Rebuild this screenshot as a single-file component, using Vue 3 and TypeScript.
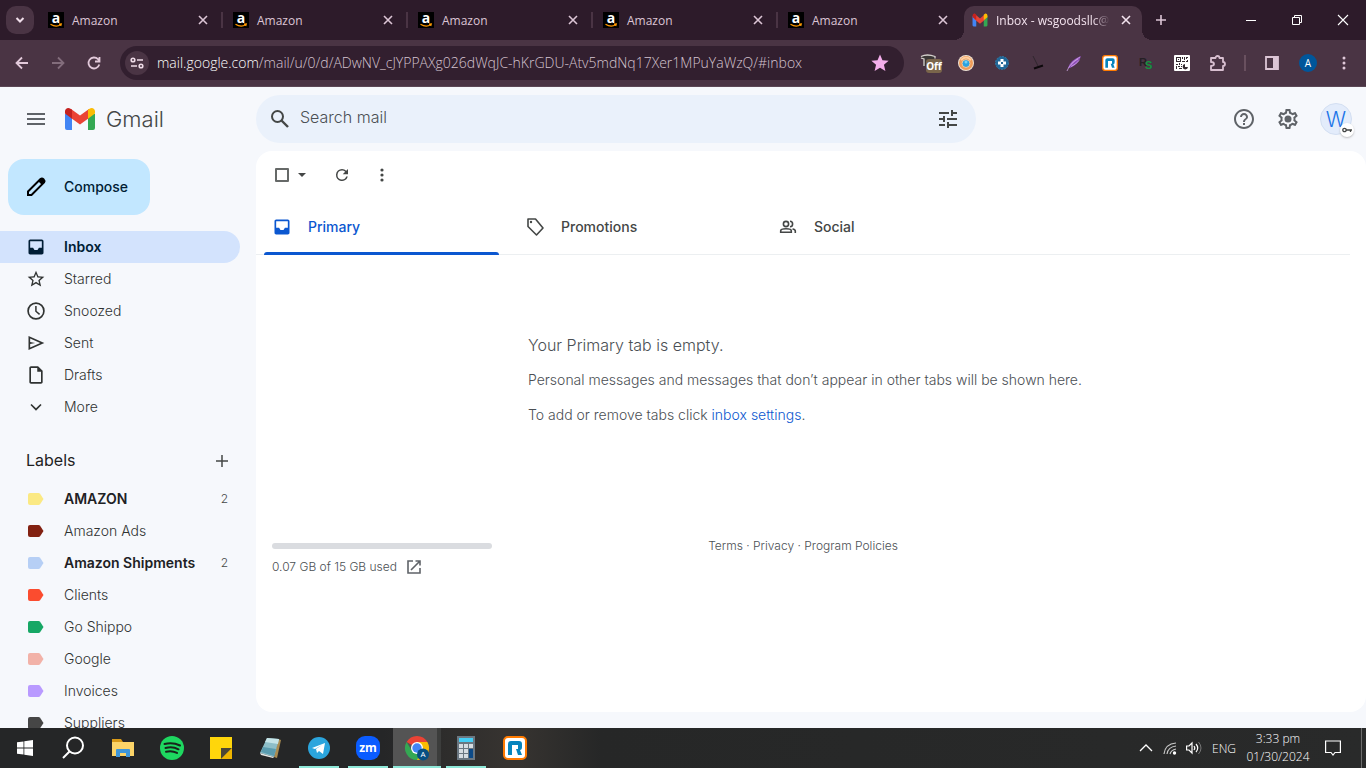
<script setup lang="ts">
interface Extension { name: string; icon: string }
interface NavItem { name: string; icon: string; active?: boolean }
interface LabelItem { name: string; color: string; count?: number }
interface TaskItem { name: string; icon: string; open?: boolean; active?: boolean }

const tabs: string[] = ['Amazon', 'Amazon', 'Amazon', 'Amazon', 'Amazon']

const extensions: Extension[] = [
  { name: 'Blocker', icon: 'blocker' },
  { name: 'Orb', icon: 'orb' },
  { name: 'Plus', icon: 'plus' },
  { name: 'Lamp', icon: 'lamp' },
  { name: 'Feather', icon: 'feather' },
  { name: 'RingCentral', icon: 'ring' },
  { name: 'RS', icon: 'rs' },
  { name: 'QR code', icon: 'qr' },
  { name: 'Extensions', icon: 'puzzle' },
]

const nav: NavItem[] = [
  { name: 'Inbox', icon: 'inbox', active: true },
  { name: 'Starred', icon: 'star' },
  { name: 'Snoozed', icon: 'clock' },
  { name: 'Sent', icon: 'sent' },
  { name: 'Drafts', icon: 'draft' },
  { name: 'More', icon: 'more' },
]

const labels: LabelItem[] = [
  { name: 'AMAZON', color: '#fbe983', count: 2 },
  { name: 'Amazon Ads', color: '#822111' },
  { name: 'Amazon Shipments', color: '#b6cff5', count: 2 },
  { name: 'Clients', color: '#fb4c2f' },
  { name: 'Go Shippo', color: '#16a765' },
  { name: 'Google', color: '#f2b2a8' },
  { name: 'Invoices', color: '#b99aff' },
  { name: 'Suppliers', color: '#464646' },
]

const navPaths: Record<string, string> = {
  inbox: 'M19 3H5c-1.100 0-2 .9-2 2v14c0 1.100.9 2 2 2h14c1.100 0 2-.9 2-2V5c0-1.100-.9-2-2-2zM5 5h14v8h-3.500l-1.700 2.600h-3.600L8.500 13H5z',
  star: 'M22 9.240l-7.190-.62L12 2 9.190 8.630 2 9.240l5.460 4.730L5.820 21 12 17.270 18.180 21l-1.630-7.030L22 9.240zM12 15.400l-3.760 2.270 1-4.280-3.320-2.880 4.380-.38L12 6.100l1.710 4.040 4.380.38-3.320 2.880 1 4.280L12 15.400z',
  clock: 'M12 1.500a10.500 10.500 0 1 0 0 21 10.500 10.500 0 0 0 0-21zm0 19a8.500 8.500 0 1 1 0-17 8.500 8.500 0 0 1 0 17zM12.800 6H11v6.700l4.700 4.100 1.200-1.400-4.100-3.500z',
  sent: 'M3 3.500v17L22 12 3 3.500zm2 3.100L17.100 12 5 17.400v-4.200l6-1.200-6-1.200V6.600z',
  draft: 'M14.500 1.500H6c-1.100 0-2 .9-2 2v17c0 1.100.9 2 2 2h12c1.100 0 2-.9 2-2V7l-5.500-5.500zM18 20.500H6v-17h7.500V8H18v12.500z',
  more: 'M6.700 8.300L12 13.600l5.300-5.300 1.400 1.400L12 16.400 5.300 9.700z',
}

const taskItems: TaskItem[] = [
  { name: 'Start', icon: 'start' },
  { name: 'Search', icon: 'search' },
  { name: 'File Explorer', icon: 'files' },
  { name: 'Spotify', icon: 'spotify' },
  { name: 'Sticky Notes', icon: 'sticky' },
  { name: 'Notepad', icon: 'notepad' },
  { name: 'Telegram', icon: 'telegram', open: true },
  { name: 'Zoom', icon: 'zoom', open: true },
  { name: 'Google Chrome', icon: 'chrome', open: true, active: true },
  { name: 'Calculator', icon: 'calc', open: true },
  { name: 'RingCentral', icon: 'ring' },
]
</script>

<template>
  <div class="desktop">
    <header class="tabstrip">
      <button class="tab-search" aria-label="Search tabs">
        <svg width="12" height="12" viewBox="0 0 12 12"><path d="M2.500 4L6 7.500 9.500 4" fill="none" stroke="#f0deea" stroke-width="2" /></svg>
      </button>
      <div v-for="(tab, i) in tabs" :key="i" class="tab">
        <svg class="favicon" width="16" height="16" viewBox="0 0 16 16">
          <rect width="16" height="16" fill="#000" />
          <text x="8" y="11" text-anchor="middle" class="amazon-a">a</text>
          <path d="M2.500 12.200Q8 15.700 12.600 12.800M11 12.100l2.300-.1-.6 2" fill="none" stroke="#f90" stroke-width="1.200" />
        </svg>
        <span class="tab-title">{{ tab }}</span>
        <button class="tab-close" aria-label="Close tab">
          <svg width="10" height="10" viewBox="0 0 10 10"><path d="M1 1l8 8M9 1L1 9" stroke="#dcc5d5" stroke-width="1.600" /></svg>
        </button>
        <i v-if="i < 4" class="tab-sep"></i>
      </div>
      <div class="tab current">
        <svg class="favicon" width="16" height="16" viewBox="0 0 30 30">
          <path fill="#4285f4" d="M1 8h7v19H3q-2 0-2-2z" /><path fill="#34a853" d="M22 8h7v17q0 2-2 2h-5z" />
          <path fill="#ea4335" d="M4 3l11 9 11-9v10l-11 9L4 13z" /><path fill="#c5221f" d="M1 7Q1 3 5 3l3 2v10L1 10z" /><path fill="#fbbc04" d="M29 7q0-4-4-4l-3 2v10l7-5z" />
        </svg>
        <span class="tab-title">Inbox - wsgoodsllc@g</span>
        <button class="tab-close" aria-label="Close tab">
          <svg width="10" height="10" viewBox="0 0 10 10"><path d="M1 1l8 8M9 1L1 9" stroke="#f3e3ee" stroke-width="1.600" /></svg>
        </button>
      </div>
      <button class="new-tab" aria-label="New tab">
        <svg width="12" height="12" viewBox="0 0 12 12"><path d="M6 1v10M1 6h10" stroke="#dcc5d5" stroke-width="1.600" /></svg>
      </button>
      <div class="window-controls">
        <button aria-label="Minimize"><svg width="10" height="10" viewBox="0 0 10 10"><path d="M0 5.500h10" stroke="#fff" /></svg></button>
        <button aria-label="Restore"><svg width="10" height="10" viewBox="0 0 10 10"><path d="M.5 2.500h7v7h-7zM2.500 2.500v-2h7v7h-2" fill="none" stroke="#fff" /></svg></button>
        <button aria-label="Close"><svg width="10" height="10" viewBox="0 0 10 10"><path d="M0 0l10 10M10 0L0 10" stroke="#fff" stroke-width="1.100" /></svg></button>
      </div>
    </header>

    <div class="toolbar">
      <button class="tool" aria-label="Back"><svg width="14" height="14" viewBox="0 0 14 14"><path d="M13 7H2M7 1.500L1.500 7 7 12.500" fill="none" stroke="#e2c9da" stroke-width="1.800" /></svg></button>
      <button class="tool" aria-label="Forward"><svg width="14" height="14" viewBox="0 0 14 14"><path d="M1 7h11M7 1.500L12.500 7 7 12.500" fill="none" stroke="#836d7c" stroke-width="1.800" /></svg></button>
      <button class="tool" aria-label="Reload"><svg width="14" height="14" viewBox="0 0 14 14"><path d="M12.300 8.500A5.500 5.500 0 1 1 11 3.200L12.300 4.500M12.500 1v4.500H8" fill="none" stroke="#e2c9da" stroke-width="1.800" /></svg></button>
      <div class="omnibox">
        <button class="site-info" aria-label="Site information">
          <svg width="14" height="12" viewBox="0 0 14 12"><g fill="none" stroke="#efdce8" stroke-width="1.600"><circle cx="3" cy="3" r="1.800" /><path d="M7 3h6M1 9h6" /><circle cx="11" cy="9" r="1.800" /></g></svg>
        </button>
        <div class="url">mail.google.com<span>/mail/u/0/d/ADwNV_cJYPPAXg026dWqJC-hKrGDU-Atv5mdNq17Xer1MPuYaWzQ/#inbox</span></div>
        <button class="bookmark" aria-label="Bookmark"><svg width="18" height="18" viewBox="0 0 16 16"><path fill="#f4aeeb" d="M8 .5l2.200 5 5.500.5-4.200 3.600 1.300 5.400L8 12.200 3.200 15l1.300-5.400L.3 6l5.500-.5z" /></svg></button>
      </div>
      <div class="extensions">
        <button v-for="ext in extensions" :key="ext.name" class="tool" :aria-label="ext.name">
          <svg v-if="ext.icon === 'blocker'" width="24" height="24" viewBox="0 0 24 24">
            <path d="M4 5q5-3 13 0v4H9L7 16l-2-1 1-7-3-1z" fill="#3c3837" /><path d="M3 5.500q6-3 14 0v2M3 7l3 1v7" stroke="#d6d1ce" fill="none" stroke-width="1.300" />
            <rect x="8" y="8" width="16" height="14" rx="3" fill="#7a654b" /><text x="16" y="19" text-anchor="middle" class="off-text">Off</text>
          </svg>
          <svg v-else-if="ext.icon === 'orb'" width="16" height="16" viewBox="0 0 16 16"><circle cx="8" cy="8" r="8" fill="#f0e3d5" /><circle cx="8" cy="8" r="7" fill="#ef9b58" /><path d="M3 5q5-5 10 0" stroke="#ffd0a1" stroke-width="2" fill="none" /><circle cx="8" cy="8.500" r="4" fill="#2aa2e0" stroke="#f9c797" /><circle cx="8" cy="7" r="1.500" fill="#72d1f5" /></svg>
          <svg v-else-if="ext.icon === 'plus'" width="14" height="14" viewBox="0 0 14 14"><circle cx="7" cy="7" r="6.500" fill="#216899" stroke="#2f78a4" stroke-dasharray="2 1" /><path d="M5.500 3h3v2.500H11v3H8.500V11h-3V8.500H3v-3h2.500z" fill="#fff" /><path d="M6 6h2v2H6z" fill="#216899" /></svg>
          <svg v-else-if="ext.icon === 'lamp'" width="16" height="16" viewBox="0 0 16 16"><path d="M3 1l5 10" stroke="#2a2228" stroke-width=".8" fill="none" /><path d="M4 13.500l9-3" stroke="#0d090c" stroke-width="2" /></svg>
          <svg v-else-if="ext.icon === 'feather'" width="16" height="16" viewBox="0 0 16 16"><path d="M2 13Q4 5 15 1q-2 8-11 12z" fill="#8f50ba" /><path d="M1 16Q4 8 14 2M5 9.500Q8 6 12 4M5 11.500q5-2 8-6" stroke="#d0a7e5" fill="none" stroke-width=".8" /></svg>
          <svg v-else-if="ext.icon === 'ring'" width="16" height="16" viewBox="0 0 24 24"><rect x="1" y="1" width="22" height="22" rx="4" fill="#fff" stroke="#ff7a00" stroke-width="2" /><path fill="#0684bd" d="M5 8q0-3 3-3h8q3 0 3 3v3q0 3-2 3l2 5h-4l-2-6h2V9H9v10H5z" /></svg>
          <svg v-else-if="ext.icon === 'rs'" width="14" height="14" viewBox="0 0 14 14"><text x="0" y="10" class="rs-text">R</text><text x="6" y="13" class="rs-text rs-green">S</text></svg>
          <svg v-else-if="ext.icon === 'qr'" width="16" height="16" viewBox="0 0 16 16"><rect width="16" height="16" rx="1" fill="#fff" /><path fill="#342b31" fill-rule="evenodd" d="M2 2h5v5H2zM3 3v3h3V3zM4 4h1v1H4zM8 2h1v2H8zM10 2h1v3h-1zM12 2h2v1h-1v1h-1zM13 5h1v2h-2V6h1zM8 6h3v1H8zM2 9h2v1H2zM5 8h1v2H5zM7 9h1v1H7zM2 11h1v3H2zM4 11h2v1H4zM5 13h3v1H5zM7 11h1v1H7z" /><path fill="#342b31" d="M11 9a2.700 2.700 0 1 0 3 3h-3z" /></svg>
          <svg v-else width="18" height="18" viewBox="0 0 18 18"><path d="M2 4h4.500a2 2 0 0 1 4 0H14v4a2 2 0 0 1 0 4v4H2v-4q3-.2 3-2T2 8z" fill="none" stroke="#d8bfd0" stroke-width="1.800" stroke-linejoin="round" /></svg>
        </button>
        <i class="tool-sep"></i>
        <button class="tool" aria-label="Side panel"><svg width="14" height="14" viewBox="0 0 14 14"><path d="M1 1h12v12H1z" fill="none" stroke="#dcc5d5" stroke-width="1.800" /><path d="M8 1h5v12H8z" fill="#dcc5d5" /></svg></button>
        <button class="tool" aria-label="Profile"><span class="profile">A</span></button>
        <button class="tool" aria-label="Browser menu"><svg width="4" height="14" viewBox="0 0 4 14" fill="#e0c8d9"><circle cx="2" cy="2" r="1.500" /><circle cx="2" cy="7" r="1.500" /><circle cx="2" cy="12" r="1.500" /></svg></button>
      </div>
    </div>

    <div class="gmail">
      <header class="mail-header">
        <div class="brand">
          <button class="menu" aria-label="Main menu"><svg width="18" height="12" viewBox="0 0 18 12"><path d="M0 1h18M0 6h18M0 11h18" stroke="#5f6368" stroke-width="2" /></svg></button>
          <svg width="30" height="22" viewBox="0 0 30 22">
            <path fill="#4285f4" d="M0 6h7v16H2q-2 0-2-2z" /><path fill="#34a853" d="M23 6h7v14q0 2-2 2h-5z" />
            <path fill="#ea4335" d="M6 1l9 6.500L24 1v9l-9 6.500L6 10z" /><path fill="#c5221f" d="M0 3.300C0 .3 3.200-1 5.500.7L7 1.800v8.900L0 5.500z" /><path fill="#fbbc04" d="M30 3.300C30 .3 26.800-1 24.500.7L23 1.800v8.900l7-5.200z" />
          </svg>
          <span class="brand-name">Gmail</span>
        </div>
        <form class="search" role="search" @submit.prevent>
          <button type="submit" aria-label="Search"><svg width="18" height="18" viewBox="0 0 18 18"><g fill="none" stroke="#444746" stroke-width="2"><circle cx="6.500" cy="6.500" r="5.500" /><path d="M10.500 10.500l6.500 6.500" stroke-width="2.400" /></g></svg></button>
          <input type="text" placeholder="Search mail" aria-label="Search mail" />
          <button type="button" aria-label="Search options"><svg width="24" height="24" viewBox="0 0 24 24" fill="#444746"><path d="M3 17v2h6v-2H3zM3 5v2h10V5H3zm10 16v-2h8v-2h-8v-2h-2v6h2zM7 9v2H3v2h4v2h2V9H7zm14 4v-2H11v2h10zm-6-4h2V7h4V5h-4V3h-2v6z" /></svg></button>
        </form>
        <div class="account">
          <button aria-label="Support"><svg width="24" height="24" viewBox="0 0 24 24" fill="#5f6368"><path d="M11 18h2v-2h-2v2zm1-16C6.480 2 2 6.480 2 12s4.480 10 10 10 10-4.480 10-10S17.520 2 12 2zm0 18c-4.410 0-8-3.590-8-8s3.590-8 8-8 8 3.590 8 8-3.590 8-8 8zm0-14c-2.210 0-4 1.790-4 4h2c0-1.100.9-2 2-2s2 .9 2 2c0 2-3 1.750-3 5h2c0-2.250 3-2.500 3-5 0-2.210-1.790-4-4-4z" /></svg></button>
          <button aria-label="Settings"><svg width="24" height="24" viewBox="0 0 24 24" fill="#5f6368"><path d="M19.430 12.980c.04-.32.07-.64.07-.98 0-.34-.03-.66-.07-.98l2.110-1.650c.19-.15.24-.42.12-.64l-2-3.460c-.09-.16-.26-.25-.44-.25-.06 0-.12.01-.17.03l-2.490 1c-.52-.4-1.080-.73-1.690-.98l-.38-2.650C14.460 2.180 14.250 2 14 2h-4c-.25 0-.46.18-.49.42l-.38 2.650c-.61.25-1.170.59-1.690.98l-2.490-1c-.06-.02-.12-.03-.18-.03-.17 0-.34.09-.43.25l-2 3.460c-.13.22-.07.49.12.64l2.110 1.650c-.04.32-.07.65-.07.98 0 .33.03.66.07.98l-2.110 1.650c-.19.15-.24.42-.12.64l2 3.460c.09.16.26.25.44.25.06 0 .12-.01.17-.03l2.490-1c.52.4 1.080.73 1.690.98l.38 2.650c.03.24.24.42.49.42h4c.25 0 .46-.18.49-.42l.38-2.650c.61-.25 1.170-.59 1.690-.98l2.490 1c.06.02.12.03.18.03.17 0 .34-.09.43-.25l2-3.460c.12-.22.07-.49-.12-.64l-2.110-1.650zm-1.980-1.710c.04.31.05.52.05.73 0 .21-.02.43-.05.73l-.14 1.130.89.7 1.080.84-.7 1.210-1.270-.51-1.040-.42-.9.68c-.43.32-.84.56-1.250.73l-1.060.43-.16 1.130-.2 1.350h-1.400l-.19-1.350-.16-1.130-1.060-.43c-.43-.18-.83-.41-1.230-.71l-.91-.7-1.060.43-1.270.51-.7-1.210 1.080-.84.89-.7-.14-1.130c-.03-.31-.05-.54-.05-.74s.02-.43.05-.73l.14-1.130-.89-.7-1.080-.84.7-1.210 1.270.51 1.040.42.9-.68c.43-.32.84-.56 1.250-.73l1.060-.43.16-1.130.2-1.350h1.390l.19 1.350.16 1.130 1.060.43c.43.18.83.41 1.230.71l.91.7 1.060-.43 1.270-.51.7 1.210-1.070.85-.89.7.14 1.130z" /><circle cx="12" cy="12" r="3.500" /></svg></button>
          <button class="avatar" aria-label="Google Account">W
            <span class="key"><svg width="10" height="6" viewBox="0 0 10 6" fill="none" stroke="#444746" stroke-width="1.300"><circle cx="2.500" cy="3" r="1.700" /><path d="M4 3h6M8.500 3v2" /></svg></span>
          </button>
        </div>
      </header>

      <div class="mail-body">
        <aside class="sidebar">
          <button class="compose">
            <svg width="20" height="20" viewBox="0 0 20 20"><path d="M2 14.500L14.500 2Q16 .8 17.500 2.200T18 5.500L5.500 18H2z" fill="none" stroke="#000" stroke-width="2" /><path d="M12 4l3-3q2 0 4 4l-3 3z" fill="#000" /></svg>
            <span class="caption">Compose</span>
          </button>
          <nav class="folders">
            <a v-for="item in nav" :key="item.name" href="#" class="row" :class="{ active: item.active }">
              <svg width="20" height="20" viewBox="0 0 24 24" fill="currentColor" fill-rule="evenodd"><path :d="navPaths[item.icon]" /></svg>
              <span class="caption">{{ item.name }}</span>
            </a>
          </nav>
          <div class="labels-head">
            <h2 class="caption">Labels</h2>
            <button aria-label="Create new label"><svg width="12" height="12" viewBox="0 0 12 12"><path d="M6 0v12M0 6h12" stroke="#444746" stroke-width="1.500" /></svg></button>
          </div>
          <nav class="label-list">
            <a v-for="label in labels" :key="label.name" href="#" class="row" :class="{ unread: label.count }">
              <svg width="20" height="20" viewBox="0 0 20 20"><path :fill="label.color" d="M4 4h8.500q1 0 1.600.8L17.500 10l-3.400 5.200q-.6.8-1.600.8H4q-2 0-2-2V6q0-2 2-2z" /></svg>
              <span class="caption">{{ label.name }}</span>
              <small v-if="label.count" class="caption">{{ label.count }}</small>
            </a>
          </nav>
        </aside>

        <main class="panel">
          <div class="actions">
            <input type="checkbox" aria-label="Select" />
            <button class="caret" aria-label="Select options"><svg width="8" height="4" viewBox="0 0 8 4"><path d="M0 0h8L4 4z" fill="#444746" /></svg></button>
            <button class="action" aria-label="Refresh"><svg width="18" height="18" viewBox="0 0 24 24" fill="#444746"><path d="M17.650 6.350A7.950 7.950 0 0 0 12 4a8 8 0 1 0 7.730 10h-2.080A6 6 0 1 1 12 6c1.660 0 3.140.69 4.220 1.780L13 11h7V4l-2.350 2.350z" /></svg></button>
            <button class="action" aria-label="More"><svg width="4" height="14" viewBox="0 0 4 14" fill="#444746"><circle cx="2" cy="2" r="1.600" /><circle cx="2" cy="7" r="1.600" /><circle cx="2" cy="12" r="1.600" /></svg></button>
          </div>
          <div class="categories" role="tablist">
            <button role="tab" class="category selected" aria-selected="true">
              <svg width="20" height="20" viewBox="0 0 24 24" fill="currentColor" fill-rule="evenodd"><path :d="navPaths.inbox" /></svg><span class="caption">Primary</span>
            </button>
            <button role="tab" class="category">
              <svg width="20" height="20" viewBox="0 0 20 20"><path d="M3 2h7.500L18 11l-6.500 7L3 9.500z" fill="none" stroke="currentColor" stroke-width="1.600" stroke-linejoin="round" /><circle cx="6" cy="5" r="1.200" fill="currentColor" /></svg><span class="caption">Promotions</span>
            </button>
            <button role="tab" class="category">
              <svg width="20" height="20" viewBox="0 0 20 20"><g fill="none" stroke="currentColor" stroke-width="1.600"><circle cx="8" cy="7" r="2.600" /><path d="M2.700 15.200v-1.400q0-2 5.300-2t5.300 2v1.400zM12 4.200q2.600.1 2.600 2.800T12 9.800M14.500 12q2.800.4 2.800 2v2" /></g></svg><span class="caption">Social</span>
            </button>
          </div>
          <section class="empty">
            <p class="lead">Your Primary tab is empty.</p>
            <p>Personal messages and messages that don’t appear in other tabs will be shown here.</p>
            <p>To add or remove tabs click <a href="#">inbox settings</a>.</p>
          </section>
          <footer class="panel-footer">
            <div class="storage">
              <div class="meter"></div>
              <div class="usage">0.07 GB of 15 GB used
                <a href="#" aria-label="Manage storage"><svg width="14" height="14" viewBox="0 0 14 14"><path d="M6 1H1v12h12V8M8.500 1H13v4.500M13 1L4 10" fill="none" stroke="#5f6368" stroke-width="1.600" /></svg></a>
              </div>
            </div>
            <div class="legal"><a href="#">Terms</a> · <a href="#">Privacy</a> · <a href="#">Program Policies</a></div>
          </footer>
        </main>
      </div>
    </div>

    <footer class="taskbar">
      <button v-for="item in taskItems" :key="item.name" class="task" :class="{ open: item.open, front: item.active }" :aria-label="item.name">
        <svg v-if="item.icon === 'start'" width="16" height="16" viewBox="0 0 16 16"><path fill="#fff" d="M0 2.300l6.500-.9v6.200H0zM7.300 1.300L16 0v7.600H7.300zM0 8.400h6.500v6.200L0 13.700zM7.300 8.400H16V16l-8.700-1.300z" /></svg>
        <svg v-else-if="item.icon === 'search'" width="24" height="24" viewBox="0 0 24 24"><g fill="none" stroke="#fff" stroke-width="2"><circle cx="13" cy="9.500" r="8" /><path d="M7.500 15.500L1 22" /></g></svg>
        <svg v-else-if="item.icon === 'files'" width="24" height="20" viewBox="0 0 24 20"><path fill="#d99a18" d="M1 1h9l2 3h11v3H1z" /><path fill="#fcd468" d="M1 4h22v14H1z" /><path fill="#3f96d8" d="M5 19v-7q0-1 1-1h12q1 0 1 1v7h-4v-4H9v4z" /></svg>
        <svg v-else-if="item.icon === 'spotify'" width="24" height="24" viewBox="0 0 24 24"><circle cx="12" cy="12" r="12" fill="#1ed760" /><path d="M4.500 8q8-2.300 15.500 1.500M5.500 12q7-2 13 1.300M6 15.700q6-1.500 11 1.200" fill="none" stroke="#18231b" stroke-width="2" stroke-linecap="round" /></svg>
        <svg v-else-if="item.icon === 'sticky'" width="22" height="22" viewBox="0 0 22 22"><path fill="#ffd60b" d="M0 0h22v11L11 22H0z" /><path fill="#4c4735" d="M11 11h11L11 22z" /><path fill="#efb500" d="M22 11v11H11z" /></svg>
        <svg v-else-if="item.icon === 'notepad'" width="24" height="24" viewBox="0 0 24 24"><path fill="#a98b50" d="M20 3l3 1-4 18-3-1z" /><path fill="#8dbec8" d="M9 2l12 1-5 18-14-4z" /><path fill="#5a9caf" d="M5 11l13 2-2 7-13-4z" /><path fill="#c5e4e8" d="M9 2l12 1-1 5L7 6z" /><path d="M2 17l14 4-1 1-12-3z" fill="#e6e8e5" /></svg>
        <svg v-else-if="item.icon === 'telegram'" width="22" height="22" viewBox="0 0 22 22"><circle cx="11" cy="11" r="11" fill="#2ba5dd" /><path fill="#fff" d="M4 11l13-5-2 11-4-3-2 2-1-4 6-4-7 4z" /></svg>
        <svg v-else-if="item.icon === 'zoom'" width="24" height="24" viewBox="0 0 24 24"><rect width="24" height="24" rx="9" fill="#0b5cff" /><text x="12" y="16" text-anchor="middle" class="zoom-text">zm</text></svg>
        <svg v-else-if="item.icon === 'chrome'" width="24" height="26" viewBox="0 0 24 26"><path fill="#ea4335" d="M12 13L1.600 7a12 12 0 0 1 20.800 0z" /><path fill="#fbbc04" d="M12 13V7h10.400A12 12 0 0 1 12 25z" /><path fill="#34a853" d="M12 25A12 12 0 0 1 1.600 7L7 16l5 2 5-2z" /><circle cx="12" cy="13" r="6" fill="#fff" /><circle cx="12" cy="13" r="4.700" fill="#4285f4" /><circle cx="18" cy="19.500" r="6" fill="#064f83" /><text x="18" y="22" text-anchor="middle" class="chrome-text">A</text></svg>
        <svg v-else-if="item.icon === 'calc'" width="18" height="24" viewBox="0 0 18 24"><path fill="#6b7781" d="M0 0h18v24H0z" /><path fill="#45cef5" d="M2 2h14v4H2z" /><path fill="#d7dde2" d="M2 8h4v4H2zM7 8h4v4H7zM12 8h4v4h-4zM2 13h4v4H2zM7 13h4v4H7zM2 18h4v4H2zM7 18h4v4H7z" /><path fill="#0c4a87" d="M12 13h4v9h-4z" /></svg>
        <svg v-else width="24" height="24" viewBox="0 0 24 24"><rect x="1" y="1" width="22" height="22" rx="4" fill="#fff" stroke="#ff7a00" stroke-width="2" /><path fill="#0684bd" d="M5 8q0-3 3-3h8q3 0 3 3v3q0 3-2 3l2 5h-4l-2-6h2V9H9v10H5z" /></svg>
      </button>
      <div class="tray">
        <button aria-label="Hidden icons"><svg width="12" height="8" viewBox="0 0 12 8"><path d="M0 7l6-6 6 6" fill="none" stroke="#fff" stroke-width="1.300" /></svg></button>
        <button aria-label="Network"><svg width="14" height="14" viewBox="0 0 14 14"><g fill="none" stroke="#c9c9c9" stroke-width="1.200"><path d="M1 13Q2 3 13 2M4 13q1-7 9-8M7 13q1-4 6-5" /></g><circle cx="11.500" cy="12" r="1.700" fill="#fff" /></svg></button>
        <button aria-label="Volume"><svg width="16" height="14" viewBox="0 0 16 14"><path d="M.6 5H3l3-3v10L3 9H.6zM8 5q1.600 2 0 4M10 3q3.400 4 0 8" fill="none" stroke="#fff" stroke-width="1.200" /><path d="M12.500 1q5 6 0 12" fill="none" stroke="#777" /></svg></button>
        <button class="lang">ENG</button>
        <button class="clock"><span>3:33 pm</span><span>01/30/2024</span></button>
        <button class="notify" aria-label="Notifications"><svg width="16" height="16" viewBox="0 0 16 16"><path d="M.6 1h14.800v11.500H10L8 15l-2-2.500H.6z" fill="none" stroke="#fff" stroke-width="1.200" /></svg></button>
        <i class="peek"></i>
      </div>
    </footer>
  </div>
</template>

<style>
body { margin: 0; overflow: hidden; }
</style>

<style scoped>
* { box-sizing: border-box; }
button { border: 0; padding: 0; margin: 0; background: none; font: inherit; color: inherit; display: flex; align-items: center; justify-content: center; flex-shrink: 0; }
a { color: inherit; text-decoration: none; }
svg { display: block; flex-shrink: 0; overflow: visible; }
.desktop { height: 100vh; display: flex; flex-direction: column; font-family: "Open Sans", "Noto Sans", sans-serif; background: #f6f8fc; }

.tabstrip { flex: 0 0 40px; display: flex; align-items: flex-end; padding-left: 6px; background: #2d1b2a; color: #dcc5d5; font-size: 12px; }
.tab-search { width: 28px; height: 28px; border-radius: 10px; background: #4a3444; margin: 0 5px 6px 0; }
.tab { position: relative; flex: 0 1 185px; min-width: 0; height: 34px; display: flex; align-items: center; gap: 8px; padding: 0 13px 6px 9px; }
.tab-title { flex: 1; min-width: 0; white-space: nowrap; }
.tab-close { width: 16px; height: 16px; }
.tab-sep { position: absolute; right: 1px; top: 6px; width: 2px; height: 16px; background: #4a3444; }
.current { flex-basis: 178px; background: #4a3444; color: #f3e3ee; border-radius: 10px 10px 0 0; padding-right: 8px; padding-left: 8px; }
.current::before, .current::after { content: ""; position: absolute; bottom: 0; width: 10px; height: 10px; }
.current::before { left: -10px; background: radial-gradient(circle at 0 0, transparent 10px, #4a3444 10px); }
.current::after { right: -10px; background: radial-gradient(circle at 100% 0, transparent 10px, #4a3444 10px); }
.current .tab-title { mask-image: linear-gradient(90deg, #000 85%, transparent 100%); }
.new-tab { width: 28px; height: 28px; margin: 0 0 6px 5px; }
.window-controls { display: flex; margin-left: auto; align-self: stretch; }
.window-controls button { width: 46px; height: 40px; }
.amazon-a { font: bold 14px "Open Sans", sans-serif; fill: #fff; }

.toolbar { flex: 0 0 47px; display: flex; align-items: center; padding: 0 4px; background: #4a3444; border-bottom: 1px solid #5b4755; }
.tool { width: 36px; height: 36px; }
.omnibox { flex: 1; min-width: 0; height: 34px; margin: 0 8px; display: flex; align-items: center; padding: 0 12px 0 5px; border-radius: 17px; background: #321f2f; color: #fff; font-size: 14px; font-weight: 350; }
.site-info { width: 24px; height: 24px; border-radius: 50%; background: #4a3444; }
.url { flex: 1; min-width: 0; margin-left: 8px; padding-bottom: 1px; white-space: nowrap; overflow: hidden; }
.url span { color: #d5c4cf; }
.bookmark { width: 24px; height: 24px; }
.extensions { display: flex; align-items: center; }
.tool-sep { width: 2px; height: 16px; margin: 0 8px; background: #69505f; }
.profile { width: 18px; height: 18px; border-radius: 50%; background: #00569b; color: #fff; font-size: 10px; line-height: 18px; }
.off-text { font: bold 10px "Open Sans", sans-serif; fill: #fff; }
.rs-text { font: bold 11px "Liberation Sans", sans-serif; fill: #252024; }
.rs-green { fill: #15923f; }

.gmail { flex: 1; min-height: 0; display: flex; flex-direction: column; font-family: Inter, Roboto, sans-serif; font-size: 14px; font-weight: 300; color: #303332; }
.mail-header { flex: 0 0 64px; display: flex; align-items: center; }
.brand { flex: 0 0 256px; display: flex; align-items: center; padding-left: 12px; }
.menu { width: 48px; height: 48px; margin-right: 5px; }
.brand-name { font-size: 22px; font-weight: 350; margin-left: 11px; color: #444746; }
.search { flex: 0 1 720px; height: 48px; display: flex; align-items: center; border-radius: 24px; background: #eaf1fb; padding: 0 8px 0 4px; }
.search button { width: 40px; height: 40px; }
.search input { flex: 1; min-width: 0; border: 0; outline: 0; background: none; padding: 0 0 4px; font: inherit; font-size: 16px; }
.search input::placeholder { color: #4b4f54; opacity: 1; }
.account { margin-left: auto; display: flex; align-items: center; gap: 4px; padding-right: 14px; }
.account button { width: 40px; height: 40px; }
.account .avatar { position: relative; width: 32px; height: 32px; margin-left: 8px; border: 1px solid #d3dff2; border-radius: 50%; background: #e3ecfb; color: #1a73e8; font-size: 21px; font-weight: 300; }
.key { position: absolute; right: -3px; bottom: -3px; width: 14px; height: 14px; border-radius: 50%; background: #fff; box-shadow: 0 1px 2px #8888; display: flex; align-items: center; justify-content: center; }
.caption { padding-bottom: 2px; }

.mail-body { flex: 1; min-height: 0; display: flex; }
.sidebar { flex: 0 0 256px; overflow: hidden; padding-top: 8px; }
.compose { height: 56px; gap: 18px; margin: 0 0 16px 8px; padding: 0 22px 0 18px; border-radius: 16px; background: #c2e7ff; color: #001d35; font-weight: 500; }
.row { height: 32px; display: flex; align-items: center; gap: 18px; margin-right: 16px; padding: 0 12px 0 26px; border-radius: 0 16px 16px 0; }
.row span { flex: 1; }
.row small { font-size: 12px; font-weight: 300; color: #444746; }
.row.active { background: #d3e3fd; color: #001d35; font-weight: 600; }
.row.unread { color: #202124; font-weight: 600; }
.labels-head { height: 44px; margin-top: 16px; display: flex; align-items: center; justify-content: space-between; padding: 0 24px 0 26px; }
.labels-head h2 { margin: 0; font-size: 16px; font-weight: 400; color: #1f1f1f; }
.labels-head button { width: 20px; height: 20px; }

.panel { flex: 1; min-width: 0; margin-bottom: 16px; border-radius: 16px; background: #fff; }
.actions { height: 48px; display: flex; align-items: center; padding-left: 19px; }
.actions input { appearance: none; width: 14px; height: 14px; margin: 0; border: 2px solid #666968; border-radius: 1px; }
.caret { width: 20px; height: 20px; margin-left: 3px; }
.action { width: 40px; height: 40px; }
.caret + .action { margin-left: 10px; }
.categories { height: 56px; display: flex; padding-left: 8px; margin-right: 16px; border-bottom: 1px solid #eceff1; }
.category { position: relative; flex: 0 1 253px; height: 56px; justify-content: flex-start; gap: 16px; padding-left: 8px; font-weight: 500; color: #444746; }
.category.selected { color: #0b57d0; }
.selected::after { content: ""; position: absolute; left: 0; right: 18px; bottom: 0; height: 3px; border-radius: 3px 3px 0 0; background: #0b57d0; }
.empty { max-width: 566px; margin: 0 auto; padding-top: 80px; color: #4b4f54; }
.empty p { margin: 0 0 15px; line-height: 20px; }
.empty .lead { font-size: 16px; }
.empty a { color: #0b57d0; }
.panel-footer { display: grid; grid-template-columns: 1fr 1fr 1fr; padding: 98px 32px 0 16px; font-size: 12px; color: #4b4f54; }
.storage { padding-top: 5px; }
.meter { max-width: 220px; height: 6px; border-radius: 3px; background: #dadce0; }
.usage { display: flex; align-items: center; gap: 10px; margin-top: 8px; line-height: 20px; }
.legal { text-align: center; line-height: 16px; }

.taskbar { flex: 0 0 40px; display: flex; background: linear-gradient(90deg, #252627 0 28%, #363330 37%, #363330 38%, #262727 44%, #292a2a); color: #fff; font-size: 12px; }
.task { position: relative; width: 49px; height: 40px; }
.open::after { content: ""; position: absolute; left: 5px; right: 4px; bottom: 0; height: 2px; background: #8ee8d8; }
.front { background: linear-gradient(90deg, transparent 1px, #545454 1px 45px, #3c3d3c 45px); }
.front::after { left: 1px; right: 0; }
.zoom-text { font: bold 12px "Open Sans", sans-serif; fill: #fff; }
.chrome-text { font: 8px "Open Sans", sans-serif; fill: #fff; }
.tray { margin-left: auto; display: flex; align-items: center; font-weight: 350; }
.tray button { width: 24px; height: 40px; }
.tray .lang { width: 36px; }
.tray .clock { width: 72px; flex-direction: column; line-height: 18px; }
.tray .notify { width: 38px; }
.peek { width: 1px; height: 40px; margin-left: 9px; margin-right: 4px; background: #6c6c6c; }
</style>
